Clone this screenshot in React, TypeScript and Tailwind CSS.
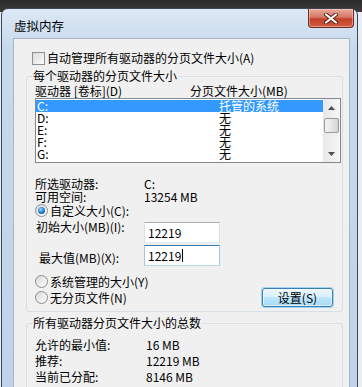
import React from "react";

// Windows 7 "虚拟内存" dialog

const Checkbox = () => (
  <span className="inline-block w-[13px] h-[13px] border border-[#8e8f8f] bg-[linear-gradient(135deg,#dcdcdc,#fbfbfb)] shrink-0" />
);

const Radio = ({ checked = false }: { checked?: boolean }) => (
  <span className="flex items-center justify-center w-[13px] h-[13px] rounded-full border border-[#8e8f8f] bg-[linear-gradient(135deg,#dadada,#fcfcfc)] shrink-0">
    {checked && (
      <span className="block w-[7px] h-[7px] rounded-full bg-[radial-gradient(circle_at_40%_35%,#9bdcff_0%,#2c8ad8_45%,#0f3f70_100%)]" />
    )}
  </span>
);

const drives = [
  { name: "C:", size: "托管的系统", selected: true },
  { name: "D:", size: "无" },
  { name: "E:", size: "无" },
  { name: "F:", size: "无" },
  { name: "G:", size: "无" },
];

export default function App() {
  return (
    <div className="w-[362px] h-[387px] overflow-hidden flex flex-col bg-[linear-gradient(to_bottom,#2c2c2c_0px,#3a3a3a_12px,#e9eef4_12px)] font-['Noto_Sans_CJK_SC','Microsoft_YaHei',sans-serif] text-[12px] text-black">
      {/* window frame */}
      <div className="ml-[1px] mt-[8px] w-[357px] flex-1 flex flex-col rounded-t-[7px] border border-[#3b4756] bg-[linear-gradient(to_bottom,#dbe8f5,#c7d9ec_40px,#bed3e9)]">
        {/* title bar */}
        <div className="h-[29px] flex items-start pl-[12px] pr-[3px]">
          <span className="mt-[10px] leading-[14px] text-[12.5px]">虚拟内存</span>
          <button className="ml-auto w-[46px] h-[19px] flex items-center justify-center rounded-b-[4px] border border-t-0 border-[#6b2a22] bg-[linear-gradient(to_bottom,#e9a99a,#d47a66_45%,#c2412c_55%,#cf5a3f)] shadow-[inset_0_0_0_1px_rgba(255,210,200,0.5)]">
            <svg width="14" height="11" viewBox="0 0 14 11">
              <path d="M2 1.5 L12 9.5 M12 1.5 L2 9.5" stroke="#5a1d14" strokeWidth="4" strokeLinecap="round" />
              <path d="M2 1.5 L12 9.5 M12 1.5 L2 9.5" stroke="#ffffff" strokeWidth="2.2" strokeLinecap="round" />
            </svg>
          </button>
        </div>

        {/* client area */}
        <div className="ml-[11px] mr-[7px] flex-1 flex flex-col overflow-hidden border border-[#a3b6ca] bg-[#f0f0f0]">
          {/* auto manage */}
          <div className="mt-[12px] ml-[18px] h-[14px] flex items-center gap-[2px]">
            <Checkbox />
            <span className="leading-[14px]">自动管理所有驱动器的分页文件大小(A)</span>
          </div>

          {/* per-drive group */}
          <fieldset className="mt-[4px] ml-[12px] w-[317px] border border-[#d5dfe5] rounded-[3px] pl-[8px] pr-[1px] pb-[4px]">
            <legend className="-ml-[3px] px-[1px] leading-[14px]">每个驱动器的分页文件大小</legend>

            <div className="mt-[1px] h-[14px] flex items-center leading-[14px]">
              <span className="w-[155px]">驱动器 [卷标](D)</span>
              <span>分页文件大小(MB)</span>
            </div>

            {/* list box */}
            <div className="h-[65px] flex border border-[#828790] bg-white">
              <div className="flex-1 flex flex-col pt-[1px]">
                {drives.map((d) => (
                  <div
                    key={d.name}
                    className={`h-[12px] flex items-center leading-[12px] ${d.selected ? "bg-[#3399ff] text-white" : ""}`}
                  >
                    <span className="w-[183px] pl-[1px]">{d.name}</span>
                    <span>{d.size}</span>
                  </div>
                ))}
              </div>
              {/* scrollbar */}
              <div className="w-[17px] flex flex-col bg-[linear-gradient(to_right,#e8e8e8,#f6f6f6)]">
                <div className="h-[17px] flex items-center justify-center">
                  <svg width="7" height="4" viewBox="0 0 7 4">
                    <path d="M0 4 L3.5 0 L7 4 Z" fill="#4d4d4d" />
                  </svg>
                </div>
                <div className="mt-[2px] mx-[1px] h-[15px] rounded-[2px] border border-[#9a9a9a] bg-[linear-gradient(to_right,#f4f4f4,#e6e6e6_50%,#d4d4d4)]" />
                <div className="mt-auto h-[17px] flex items-center justify-center">
                  <svg width="7" height="4" viewBox="0 0 7 4">
                    <path d="M0 0 L3.5 4 L7 0 Z" fill="#4d4d4d" />
                  </svg>
                </div>
              </div>
            </div>

            <div className="mt-[14px] h-[13px] flex items-center leading-[13px]">
              <span className="w-[109px]">所选驱动器:</span>
              <span>C:</span>
            </div>
            <div className="h-[13px] flex items-center leading-[13px]">
              <span className="w-[109px]">可用空间:</span>
              <span>13254 MB</span>
            </div>

            <div className="h-[15px] flex items-center gap-[2px]">
              <Radio checked />
              <span className="leading-[14px]">自定义大小(C):</span>
            </div>

            <div className="mt-[4px] h-[21px] flex items-start">
              <span className="w-[109px] pl-[1px] -mt-[2px] leading-[14px]">初始大小(MB)(I):</span>
              <div className="w-[76px] h-[21px] flex items-center pl-[3px] border border-[#abadb3] border-b-[#e3e9ef] border-x-[#dbdfe6] bg-white">
                12219
              </div>
            </div>
            <div className="mt-[2px] h-[21px] flex items-start">
              <span className="w-[109px] pl-[4px] mt-[6px] leading-[14px]">最大值(MB)(X):</span>
              <div className="w-[76px] h-[21px] flex items-center pl-[3px] border border-[#3d7bad] border-b-[#b7d9ed] border-x-[#a4c9e3] bg-white">
                12219
                <span className="ml-[1px] w-[1px] h-[13px] bg-black" />
              </div>
            </div>

            <div className="mt-[9px] h-[13px] flex items-center gap-[2px]">
              <Radio />
              <span className="leading-[14px]">系统管理的大小(Y)</span>
            </div>
            <div className="h-[19px] flex items-center gap-[2px]">
              <Radio />
              <span className="leading-[14px]">无分页文件(N)</span>
              <button className="ml-auto mr-[8px] w-[71px] h-[19px] rounded-[3px] border border-[#3c7fb1] bg-[linear-gradient(to_bottom,#eaf6fd,#d9f0fc_50%,#bee6fd_50%,#a7d9f5)] shadow-[0_0_0_1px_#9fd2f0,inset_0_0_0_1px_rgba(255,255,255,0.6)] leading-[14px]">
                设置(S)
              </button>
            </div>
          </fieldset>

          {/* totals group */}
          <fieldset className="mt-[4px] ml-[12px] w-[317px] border border-[#d5dfe5] rounded-[3px] pl-[8px] pr-[1px] pb-[20px]">
            <legend className="-ml-[3px] px-[1px] leading-[14px]">所有驱动器分页文件大小的总数</legend>
            <div className="mt-[7px] h-[16px] flex items-center leading-[14px]">
              <span className="w-[111px]">允许的最小值:</span>
              <span>16 MB</span>
            </div>
            <div className="h-[16px] flex items-center leading-[14px]">
              <span className="w-[111px]">推荐:</span>
              <span>12219 MB</span>
            </div>
            <div className="h-[16px] flex items-center leading-[14px]">
              <span className="w-[111px]">当前已分配:</span>
              <span>8146 MB</span>
            </div>
          </fieldset>
        </div>
      </div>
    </div>
  );
}
